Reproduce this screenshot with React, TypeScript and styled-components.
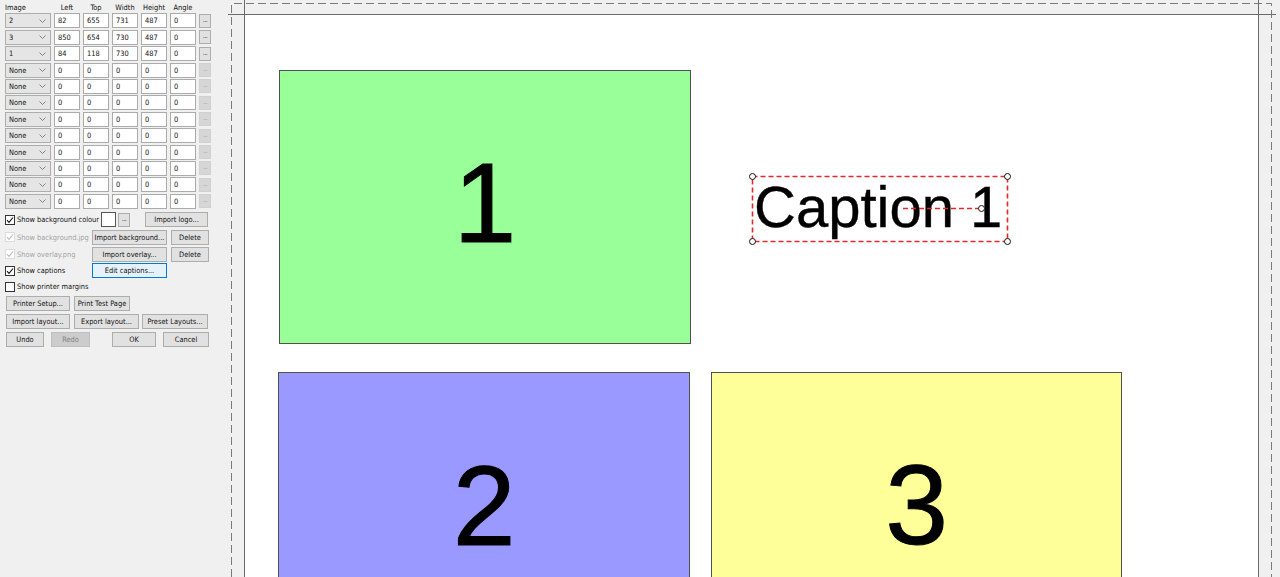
import React from 'react';
import styled, { createGlobalStyle } from 'styled-components';

const GlobalStyle = createGlobalStyle`
  html, body {
    margin: 0;
    padding: 0;
    background: #f0f0f0;
    overflow: hidden;
  }
`;

// screen pixels per layout unit, and where unit 0,0 sits on the canvas
const SCALE = 0.5636;
const ORIGIN_X = 17;
const ORIGIN_Y = 3;

type Slot = {
  image: string;
  left: number;
  top: number;
  width: number;
  height: number;
  angle: number;
};

const slots: Slot[] = [
  { image: '2', left: 82, top: 655, width: 731, height: 487, angle: 0 },
  { image: '3', left: 850, top: 654, width: 730, height: 487, angle: 0 },
  { image: '1', left: 84, top: 118, width: 730, height: 487, angle: 0 },
  ...Array.from({ length: 9 }, () => ({ image: 'None', left: 0, top: 0, width: 0, height: 0, angle: 0 })),
];

const imageColours: Record<string, string> = {
  '1': '#99ff99',
  '2': '#9999ff',
  '3': '#ffff99',
};

const Window = styled.div`
  display: flex;
  width: 1280px;
  height: 577px;
  overflow: hidden;
  background: #f0f0f0;
  font-family: "DejaVu Sans Condensed", "DejaVu Sans", "Liberation Sans", sans-serif;
  font-stretch: condensed;
  font-size: 7.4px;
  color: #111;
`;

const Panel = styled.div`
  width: 215px;
  flex: none;
  padding: 2px 0 0 5px;
  box-sizing: border-box;
`;

const LayoutGrid = styled.div`
  display: grid;
  grid-template-columns: 46px repeat(5, 26px) 12px;
  grid-template-rows: 10px;
  grid-auto-rows: 15px;
  column-gap: 3px;
  row-gap: 1.4px;
`;

const ColHead = styled.div<{ $left?: boolean }>`
  line-height: 12px;
  text-align: ${({ $left }) => ($left ? 'left' : 'center')};
`;

const Combo = styled.div`
  display: flex;
  align-items: center;
  justify-content: space-between;
  padding: 0 4px 0 3px;
  background: #e5e5e5;
  border: 1px solid #adadad;
  box-sizing: border-box;
`;

const Field = styled.div`
  display: flex;
  align-items: center;
  padding-left: 3px;
  background: #fff;
  border: 1px solid #ababab;
  box-sizing: border-box;
`;

const Dots = styled.div<{ $disabled?: boolean; $w?: number; $ml?: number }>`
  width: ${({ $w }) => $w ?? 12}px;
  height: 14px;
  margin-left: ${({ $ml }) => $ml ?? 0}px;
  align-self: center;
  display: flex;
  align-items: flex-end;
  justify-content: center;
  padding-bottom: 3px;
  box-sizing: border-box;
  font-size: 7px;
  line-height: 7px;
  letter-spacing: -0.5px;
  background: ${({ $disabled }) => ($disabled ? '#d6d6d6' : '#e1e1e1')};
  border: 1px solid ${({ $disabled }) => ($disabled ? '#d0d0d0' : '#adadad')};
  color: ${({ $disabled }) => ($disabled ? '#a8a8a8' : '#333')};
`;

const OptionsGrid = styled.div`
  display: grid;
  grid-template-rows: 18px 17px 17px 16px 16px;
  margin-top: 2px;
`;

const OptionRow = styled.div`
  display: flex;
  align-items: center;
`;

const CheckOption = styled.label<{ $w?: number; $disabled?: boolean }>`
  display: flex;
  align-items: center;
  gap: 2px;
  width: ${({ $w }) => ($w ? `${$w}px` : 'auto')};
  flex: none;
  color: ${({ $disabled }) => ($disabled ? '#a3a3a3' : '#111')};
  white-space: nowrap;
`;

const Box = styled.span<{ $disabled?: boolean }>`
  width: 10px;
  height: 10px;
  box-sizing: border-box;
  background: #fff;
  border: 1px solid ${({ $disabled }) => ($disabled ? '#dcdcdc' : '#333')};
  display: flex;
  align-items: center;
  justify-content: center;
`;

const Swatch = styled.div`
  width: 15px;
  height: 15px;
  box-sizing: border-box;
  background: #fff;
  border: 1px solid #555;
`;

const Button = styled.div<{ $w: number; $ml?: number; $focus?: boolean; $disabled?: boolean }>`
  width: ${({ $w }) => $w}px;
  height: 15px;
  margin-left: ${({ $ml }) => $ml ?? 0}px;
  flex: none;
  box-sizing: border-box;
  display: flex;
  align-items: center;
  justify-content: center;
  white-space: nowrap;
  background: ${({ $focus, $disabled }) => ($focus ? '#e5f1fb' : $disabled ? '#cccccc' : '#e1e1e1')};
  border: 1px solid ${({ $focus, $disabled }) => ($focus ? '#0078d7' : $disabled ? '#bfbfbf' : '#adadad')};
  color: ${({ $disabled }) => ($disabled ? '#838383' : '#111')};
`;

const ButtonRow = styled.div<{ $mt?: number }>`
  display: flex;
  align-items: center;
  margin-top: ${({ $mt }) => $mt ?? 3}px;
`;

const Canvas = styled.div`
  position: relative;
  flex: 1;
  height: 577px;
  overflow: hidden;
  background: #f0f0f0;
`;

const Printable = styled.div`
  margin: 15px 0 0 30px;
  width: 1013px;
  height: 562px;
  background: #fff;
`;

const Guides = styled.svg`
  position: absolute;
  left: 0;
  top: 0;
  pointer-events: none;
`;

const ImageSlot = styled.div<{ $bg: string }>`
  position: absolute;
  box-sizing: border-box;
  background: ${({ $bg }) => $bg};
  border: 1px solid #505050;
  display: flex;
  align-items: center;
  justify-content: center;
  padding-bottom: 6px;
  font-family: "Liberation Sans", Arial, sans-serif;
  font-size: 113px;
  line-height: 1;
  color: #000;
  -webkit-text-stroke: 1px #000;
`;

const Caption = styled.div`
  position: absolute;
  left: 537px;
  top: 176px;
  width: 255px;
  height: 65px;
`;

const CaptionText = styled.div`
  padding: 2px 0 0 2px;
  font-family: "Liberation Sans", Arial, sans-serif;
  font-size: 58px;
  line-height: 1;
  white-space: nowrap;
  color: #000;
  -webkit-text-stroke: 0.4px #000;
`;

const Handles = styled.svg`
  position: absolute;
  left: 0;
  top: 0;
  overflow: visible;
`;

const Chevron = () => (
  <svg width="7" height="4" viewBox="0 0 7 4">
    <polyline points="0.5,0.5 3.5,3.5 6.5,0.5" fill="none" stroke="#777" strokeWidth="0.9" />
  </svg>
);

const Check = ({ disabled }: { disabled?: boolean }) => (
  <Box $disabled={disabled}>
    <svg width="8" height="8" viewBox="0 0 8 8">
      <polyline points="1,4.2 3,6.3 7,1.5" fill="none" stroke={disabled ? '#bdbdbd' : '#111'} strokeWidth="1.1" />
    </svg>
  </Box>
);

const handlePoints = [
  [0.5, 0.5],
  [255.5, 0.5],
  [0.5, 65.5],
  [255.5, 65.5],
  [229.5, 32.5],
];

const App: React.FC = () => {
  return (
    <Window>
      <GlobalStyle />
      <Panel>
        <LayoutGrid>
          <ColHead $left>Image</ColHead>
          <ColHead>Left</ColHead>
          <ColHead>Top</ColHead>
          <ColHead>Width</ColHead>
          <ColHead>Height</ColHead>
          <ColHead>Angle</ColHead>
          <div />
          {slots.map((s, i) => (
            <React.Fragment key={i}>
              <Combo>
                <span>{s.image}</span>
                <Chevron />
              </Combo>
              <Field>{s.left}</Field>
              <Field>{s.top}</Field>
              <Field>{s.width}</Field>
              <Field>{s.height}</Field>
              <Field>{s.angle}</Field>
              <Dots $disabled={s.image === 'None'}>...</Dots>
            </React.Fragment>
          ))}
        </LayoutGrid>

        <OptionsGrid>
          <OptionRow>
            <CheckOption $w={96}>
              <Check />
              Show background colour
            </CheckOption>
            <Swatch />
            <Dots $ml={2}>...</Dots>
            <Button $w={63} $ml={15}>Import logo...</Button>
          </OptionRow>
          <OptionRow>
            <CheckOption $w={87} $disabled>
              <Check disabled />
              Show background.jpg
            </CheckOption>
            <Button $w={75}>Import background...</Button>
            <Button $w={38} $ml={4}>Delete</Button>
          </OptionRow>
          <OptionRow>
            <CheckOption $w={87} $disabled>
              <Check disabled />
              Show overlay.png
            </CheckOption>
            <Button $w={75}>Import overlay...</Button>
            <Button $w={38} $ml={4}>Delete</Button>
          </OptionRow>
          <OptionRow>
            <CheckOption $w={87}>
              <Check />
              Show captions
            </CheckOption>
            <Button $w={75} $focus>Edit captions...</Button>
          </OptionRow>
          <OptionRow>
            <CheckOption>
              <Box />
              Show printer margins
            </CheckOption>
          </OptionRow>
        </OptionsGrid>

        <ButtonRow $mt={1}>
          <Button $w={64} $ml={1}>Printer Setup...</Button>
          <Button $w={56} $ml={4}>Print Test Page</Button>
        </ButtonRow>
        <ButtonRow>
          <Button $w={64} $ml={1}>Import layout...</Button>
          <Button $w={65} $ml={4}>Export layout...</Button>
          <Button $w={66} $ml={3}>Preset Layouts...</Button>
        </ButtonRow>
        <ButtonRow>
          <Button $w={38} $ml={1}>Undo</Button>
          <Button $w={39} $ml={7} $disabled>Redo</Button>
          <Button $w={44} $ml={22}>OK</Button>
          <Button $w={46} $ml={7}>Cancel</Button>
        </ButtonRow>
      </Panel>

      <Canvas>
        <Printable />
        {slots
          .filter((s) => s.image !== 'None')
          .map((s) => (
            <ImageSlot
              key={s.image}
              $bg={imageColours[s.image]}
              style={{
                left: ORIGIN_X + s.left * SCALE,
                top: ORIGIN_Y + s.top * SCALE,
                width: s.width * SCALE,
                height: s.height * SCALE,
              }}
            >
              {s.image}
            </ImageSlot>
          ))}

        <Caption>
          <CaptionText>Caption 1</CaptionText>
          <Handles width="256" height="66">
            <rect x="0.5" y="0.5" width="255" height="65" fill="none" stroke="#e0282c" strokeWidth="1.6" strokeDasharray="5 3" />
            <line x1="151" y1="32.5" x2="226.5" y2="32.5" stroke="#e0282c" strokeWidth="1.6" strokeDasharray="5 3" />
            {handlePoints.map(([x, y], i) => (
              <circle key={i} cx={x} cy={y} r="3" fill="#fff" stroke="#111" strokeWidth="1" />
            ))}
          </Handles>
        </Caption>

        <Guides width="1065" height="577">
          <path d="M16.5 577 V3.5 H1056.5 V577" fill="none" stroke="#7a7a7a" strokeWidth="1" strokeDasharray="8 4" />
          <line x1="29.5" y1="0" x2="29.5" y2="577" stroke="#6a6a6a" strokeWidth="1" />
          <line x1="1043.5" y1="0" x2="1043.5" y2="577" stroke="#6a6a6a" strokeWidth="1" />
          <line x1="13" y1="14.5" x2="1061" y2="14.5" stroke="#6a6a6a" strokeWidth="1" />
        </Guides>
      </Canvas>
    </Window>
  );
};

export default App;
